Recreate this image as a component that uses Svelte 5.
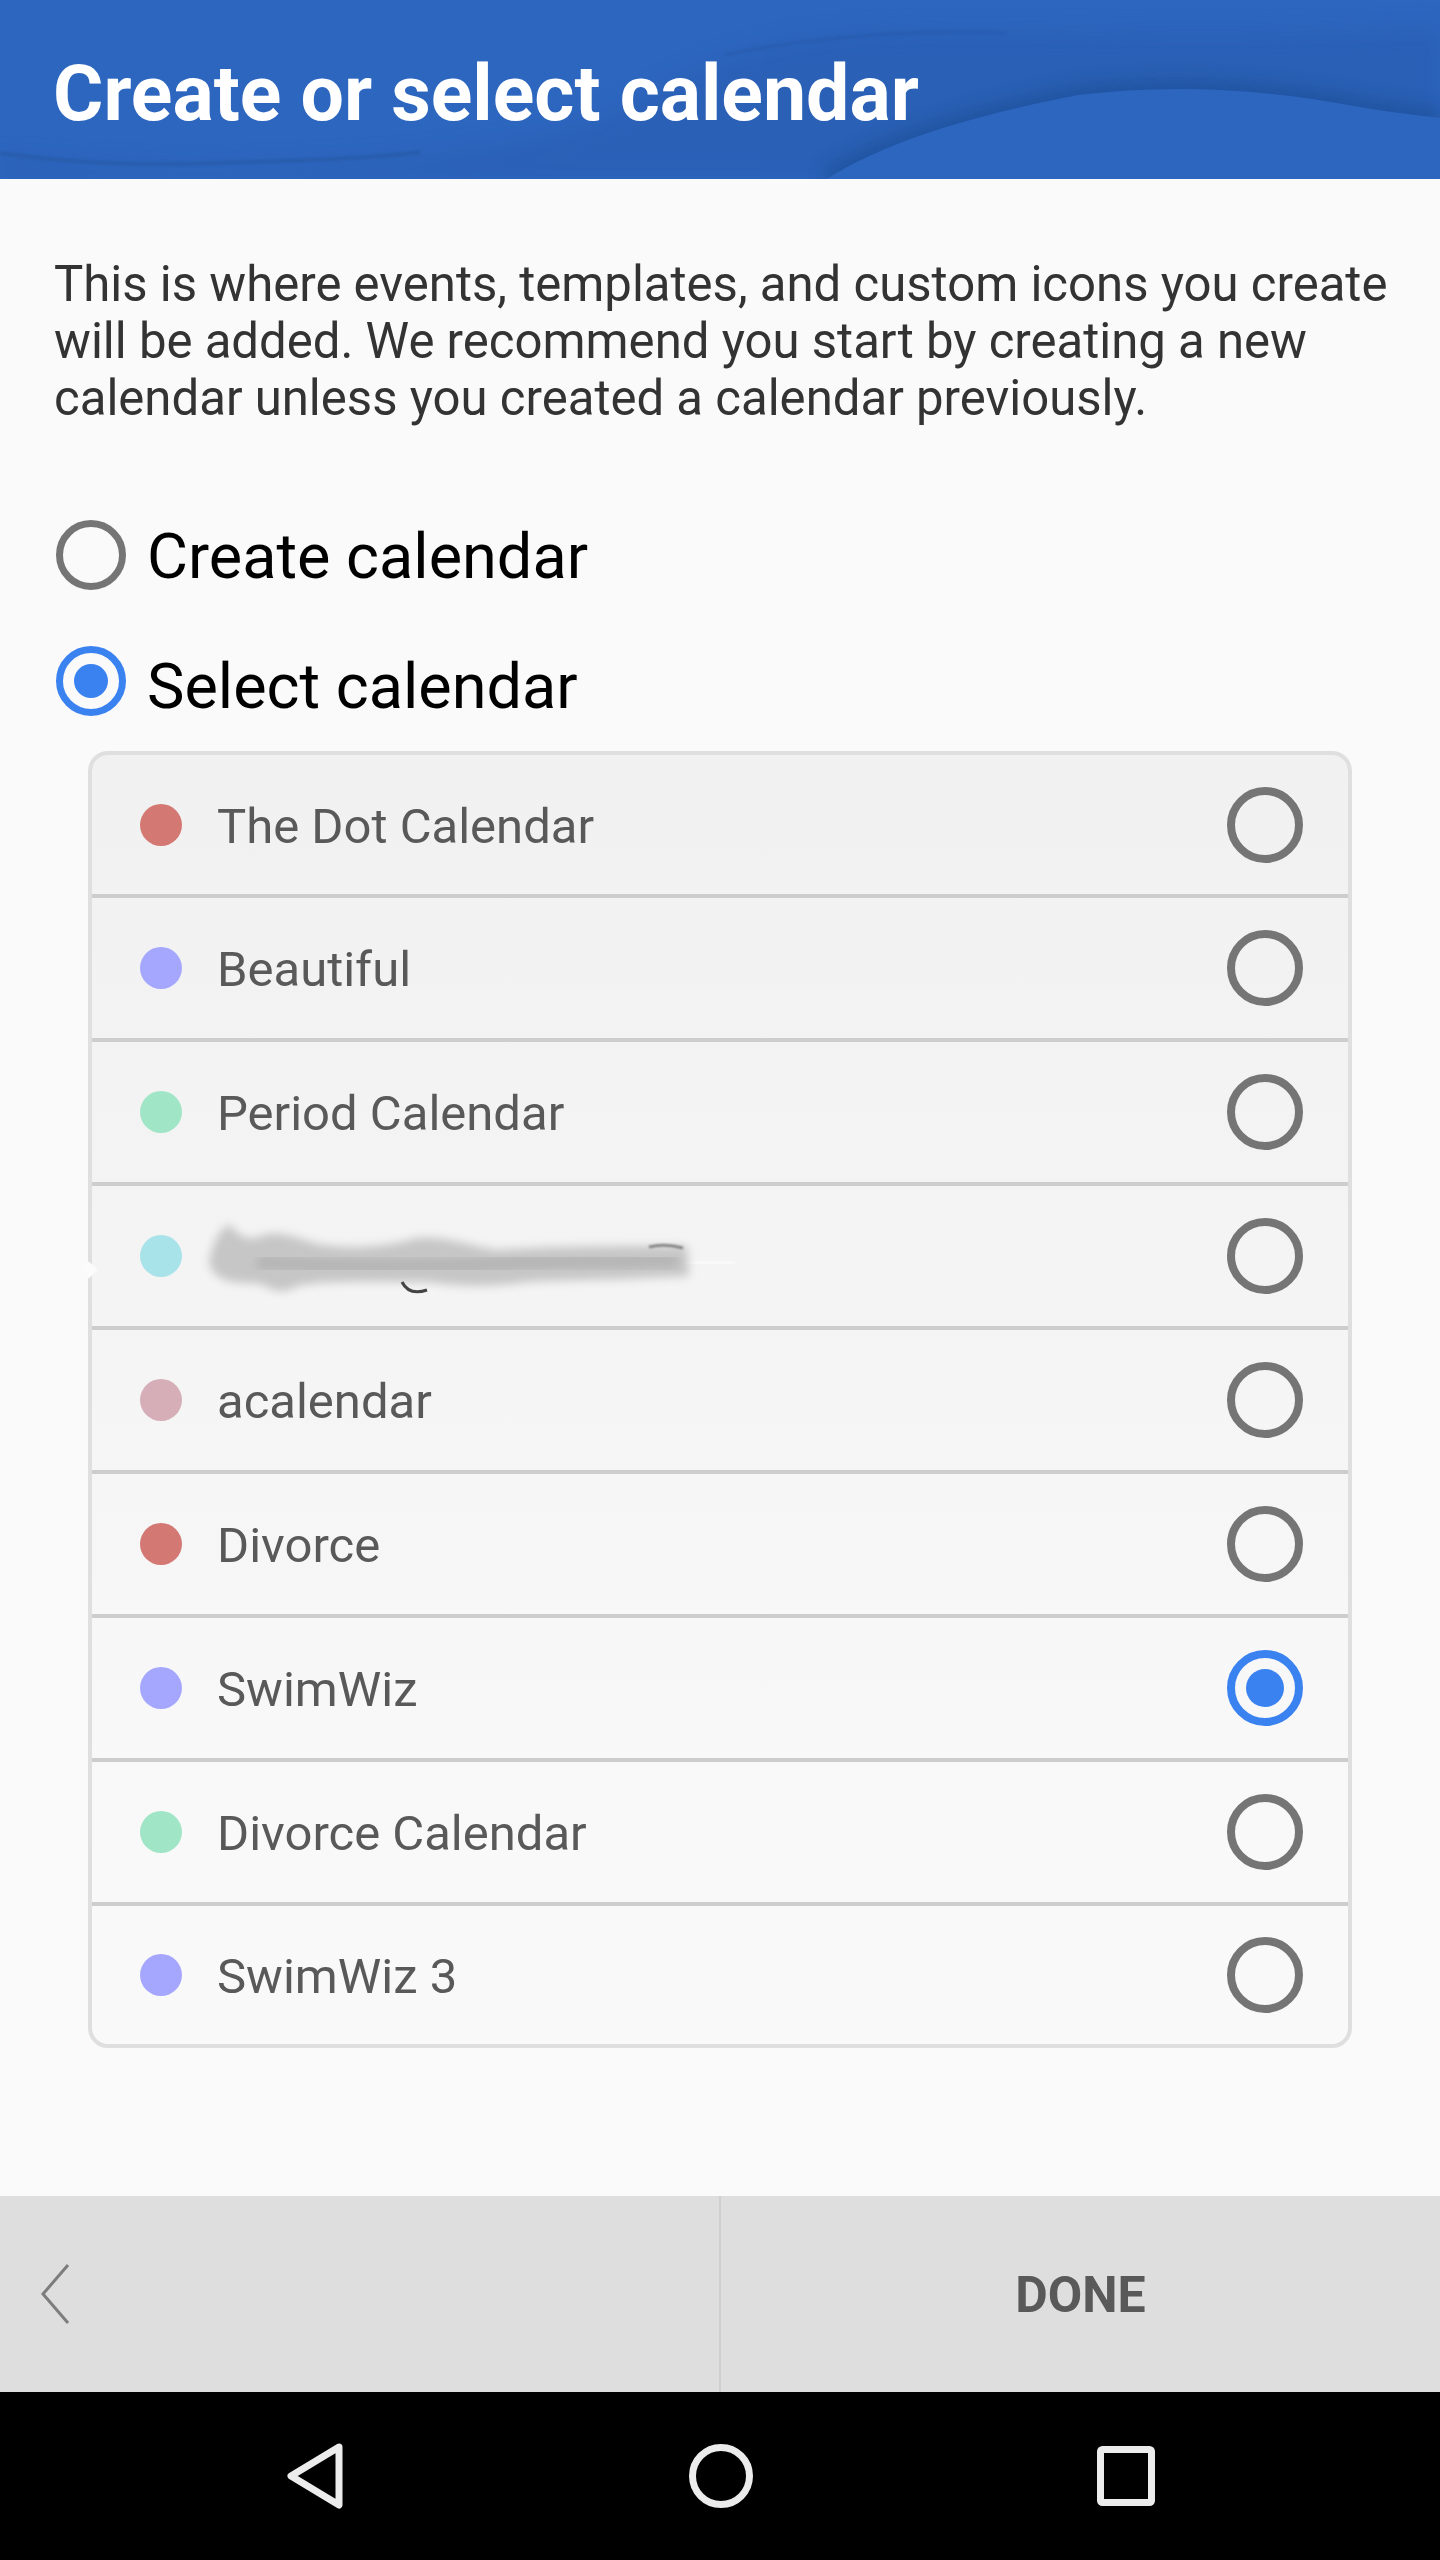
<script lang="ts">
  interface Calendar {
    name: string;
    color: string;
    selected?: boolean;
    redacted?: boolean;
  }

  const calendars: Calendar[] = [
    { name: "The Dot Calendar", color: "#d47873" },
    { name: "Beautiful", color: "#a5a7ff" },
    { name: "Period Calendar", color: "#a0e6c6" },
    { name: "", color: "#a8e3ea", redacted: true },
    { name: "acalendar", color: "#d5aeb8" },
    { name: "Divorce", color: "#d47873" },
    { name: "SwimWiz", color: "#a5a7ff", selected: true },
    { name: "Divorce Calendar", color: "#a0e6c6" },
    { name: "SwimWiz 3", color: "#a5a7ff" },
  ];
</script>

<div class="screen">
  <header class="top">
    <svg class="waves" viewBox="0 0 1440 179" preserveAspectRatio="none" aria-hidden="true">
      <defs>
        <filter id="soft" x="-10%" y="-50%" width="120%" height="200%"><feGaussianBlur stdDeviation="12" /></filter>
        <filter id="band" x="-10%" y="-50%" width="120%" height="200%"><feGaussianBlur stdDeviation="8" /></filter>
        <filter id="thin" x="-10%" y="-50%" width="120%" height="200%"><feGaussianBlur stdDeviation="1.5" /></filter>
        <clipPath id="above">
          <path d="M827 179 C880 145 960 118 1078 95 C1170 84 1260 88 1360 107 C1390 112 1415 115 1440 118 L1440 0 L0 0 L0 179 Z" />
        </clipPath>
      </defs>
      <g clip-path="url(#above)">
        <path d="M0 158 C80 168 180 172 300 166 C430 160 560 150 650 96 C710 60 790 36 900 34 C1040 30 1180 40 1440 30 L1440 179 L0 179 Z" fill="#2659a9" opacity="0.4" filter="url(#soft)" />
        <path d="M827 179 C880 145 960 118 1078 95 C1170 84 1260 88 1360 107 C1390 112 1415 115 1440 118" fill="none" stroke="#1e4d94" stroke-width="20" opacity="0.6" filter="url(#band)" />
      </g>
      <path d="M724 55 C770 45 840 36 912 33 C950 31 980 32 1007 33" fill="none" stroke="#2558a8" stroke-width="3" opacity="0.6" filter="url(#thin)" />
      <path d="M0 153 C60 162 140 166 220 163 C300 160 360 160 420 152" fill="none" stroke="#21508f" stroke-width="3" opacity="0.45" filter="url(#thin)" />
    </svg>
    <h1>Create or select calendar</h1>
  </header>

  <main class="content">
    <p class="intro">This is where events, templates, and custom icons you create will be added. We recommend you start by creating a new calendar unless you created a calendar previously.</p>

    <div class="option">
      <span class="radio big"></span>
      <span class="nudge">Create calendar</span>
    </div>
    <div class="option second">
      <span class="radio big on"></span>
      <span class="nudge more">Select calendar</span>
    </div>

    <ul class="list">
      {#each calendars as cal}
        <li class="row">
          <span class="dot" style={`background:${cal.color}`}></span>
          {#if cal.redacted}
            <span class="nick"></span>
            <span class="smudge" aria-hidden="true">
              <svg width="560" height="90" viewBox="0 0 560 90">
                <defs>
                  <filter id="smear" x="-10%" y="-40%" width="120%" height="180%"><feGaussianBlur stdDeviation="5" /></filter>
                  <filter id="streak" x="-10%" y="-100%" width="120%" height="300%"><feGaussianBlur stdDeviation="1.2" /></filter>
                </defs>
                <path d="M490 46 L535 47" stroke="#fbfbfb" stroke-width="10" stroke-linecap="round" filter="url(#smear)" />
                <path d="M12 48 C14 30 22 14 32 8 C42 20 52 26 64 20 C78 14 96 20 120 28 C160 34 190 30 220 22 C250 20 265 28 300 34 C350 30 420 30 490 30 L492 60 C420 64 370 64 330 66 C290 72 260 70 230 66 C180 66 130 64 100 70 C90 78 75 76 65 68 C45 66 20 70 12 48 Z" fill="#c6c6c6" filter="url(#smear)" />
                <path d="M60 46 C150 52 240 52 330 46 C380 44 430 44 480 44" fill="none" stroke="#b6b6b6" stroke-width="16" filter="url(#smear)" />
                <path d="M452 31 Q468 27 486 32" fill="none" stroke="#777" stroke-width="2.5" filter="url(#streak)" />
                <path d="M360 62 L480 62" fill="none" stroke="#a0a0a0" stroke-width="3" filter="url(#streak)" />
                <path d="M205 66 Q212 80 230 74" fill="none" stroke="#444" stroke-width="3" />
              </svg>
            </span>
          {:else}
            <span class="name">{cal.name}</span>
          {/if}
          <span class="radio" class:on={cal.selected}></span>
        </li>
      {/each}
    </ul>
  </main>

  <footer class="actions">
    <div class="back">
      <svg width="34" height="62" viewBox="0 0 34 62" aria-hidden="true">
        <path d="M30 2 L5 31 L30 60" fill="none" stroke="#7d7d7d" stroke-width="3" />
      </svg>
    </div>
    <div class="done">DONE</div>
  </footer>

  <nav class="sysbar">
    <svg width="60" height="70" viewBox="0 0 60 70" aria-hidden="true">
      <path d="M54 6 L6 35 L54 64 Z" fill="none" stroke="#ececec" stroke-width="7" stroke-linejoin="round" />
    </svg>
    <svg width="66" height="66" viewBox="0 0 66 66" aria-hidden="true">
      <circle cx="33" cy="33" r="28.5" fill="none" stroke="#ececec" stroke-width="7" />
    </svg>
    <svg width="58" height="60" viewBox="0 0 58 60" aria-hidden="true">
      <rect x="3.5" y="3.5" width="51" height="53" rx="2" fill="none" stroke="#ececec" stroke-width="7" />
    </svg>
  </nav>
</div>

<style>
  :global(body) {
    margin: 0;
    background: #fafafa;
  }

  .screen {
    display: flex;
    flex-direction: column;
    width: 1440px;
    height: 2560px;
    font-family: Roboto, "Liberation Sans", sans-serif;
    background: #fafafa;
    overflow: hidden;
  }

  .top {
    position: relative;
    flex: 0 0 179px;
    display: flex;
    align-items: center;
    padding: 0 53px;
    box-sizing: border-box;
    background: #2d66bf;
    overflow: hidden;
  }

  .waves {
    position: absolute;
    inset: 0;
    width: 100%;
    height: 100%;
  }

  .top h1 {
    position: relative;
    margin: 0;
    padding-top: 10px;
    color: #fff;
    font-size: 77px;
    font-weight: 700;
    line-height: 1;
  }

  .content {
    flex: 1;
    padding: 77px 54px 0;
  }

  .intro {
    margin: 0 -20px 93px 0;
    color: #333;
    font-size: 49.1px;
    line-height: 57px;
  }

  .option {
    display: flex;
    align-items: center;
    gap: 21px;
    height: 70px;
    color: #000;
    font-size: 63px;
  }

  .option.second {
    margin: 56px 0 35px;
  }

  .nudge {
    padding-top: 3px;
  }

  .nudge.more {
    padding-top: 10px;
  }

  .radio {
    flex: none;
    position: relative;
    width: 76px;
    height: 76px;
    box-sizing: border-box;
    border: 8px solid #757575;
    border-radius: 50%;
  }

  .radio.big {
    width: 70px;
    height: 70px;
    margin-left: 2px;
    border-width: 7px;
  }

  .radio.on {
    border-color: #3b82f1;
  }

  .radio.on::after {
    content: "";
    position: absolute;
    inset: 11px;
    border-radius: 50%;
    background: #3b82f1;
  }

  .list {
    list-style: none;
    margin: 0 34px;
    padding: 0;
    box-sizing: border-box;
    border: 4px solid #dfdfdf;
    border-radius: 20px;
    background: linear-gradient(#f1f1f1, #f4f4f4 40%, #f9f9f9 85%);
  }

  .row {
    position: relative;
    display: flex;
    align-items: center;
    height: 140px;
    padding: 0 45px 0 48px;
    border-bottom: 4px solid #cdcdcd;
    color: #595959;
    font-size: 49px;
  }

  .row:first-child {
    height: 139px;
  }

  .row:last-child {
    height: 138px;
    border-bottom: 0;
  }

  .dot {
    flex: none;
    width: 42px;
    height: 42px;
    margin-right: 35px;
    border-radius: 50%;
  }

  .name {
    flex: 1;
    padding-top: 3px;
  }

  .nick {
    position: absolute;
    left: -9px;
    top: 78px;
    width: 12px;
    height: 12px;
    background: #fbfbfb;
    transform: rotate(45deg);
  }

  .smudge {
    position: relative;
    flex: 1;
    align-self: stretch;
  }

  .smudge svg {
    position: absolute;
    left: -20px;
    top: 30px;
  }

  .actions {
    flex: 0 0 196px;
    display: flex;
    background: #dedede;
  }

  .back {
    flex: 0 0 721px;
    box-sizing: border-box;
    display: flex;
    align-items: center;
    padding-left: 38px;
    border-right: 2px solid #cfcfcf;
  }

  .done {
    flex: 1;
    display: flex;
    align-items: center;
    justify-content: center;
    padding-top: 2px;
    color: #595959;
    font-size: 50px;
    font-weight: 700;
  }

  .sysbar {
    flex: 0 0 168px;
    display: flex;
    align-items: center;
    background: #000;
    padding: 0 285px;
    justify-content: space-between;
  }
</style>
